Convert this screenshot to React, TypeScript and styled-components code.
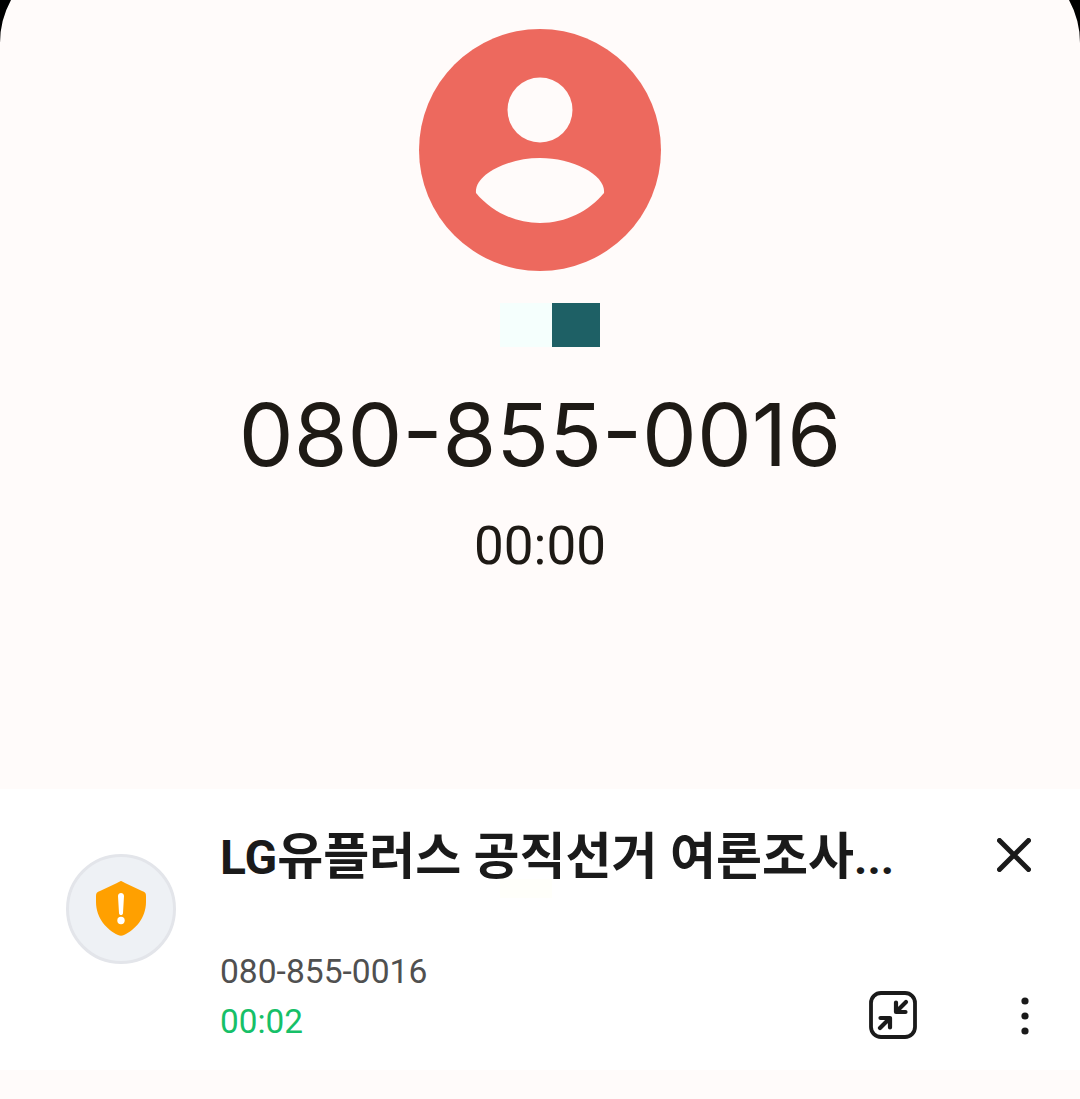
import React from 'react';
import styled, { createGlobalStyle } from 'styled-components';

const GlobalStyle = createGlobalStyle`
  html, body {
    margin: 0;
    padding: 0;
    background: #000;
  }
  * {
    box-sizing: border-box;
  }
`;

const Screen = styled.div`
  width: 1080px;
  height: 1099px;
  background: #fffbfa;
  clip-path: path('M11 0H1069A89.5 89.5 0 0 1 1080 43V1099H0V43A89.5 89.5 0 0 1 11 0Z');
  display: flex;
  flex-direction: column;
  overflow: hidden;
`;

const CallerArea = styled.section`
  height: 789px;
  padding-top: 29px;
  display: flex;
  flex-direction: column;
  align-items: center;
`;

const Avatar = styled.div`
  width: 242px;
  height: 242px;
  flex-shrink: 0;
  svg {
    display: block;
  }
`;

const Redaction = styled.div`
  margin-top: 32px;
  margin-left: 20px;
  display: flex;
  height: 44px;
`;

const RedactionBlock = styled.div<{ $width: number; $color: string }>`
  width: ${(p) => p.$width}px;
  background: ${(p) => p.$color};
`;

const PhoneNumber = styled.div`
  margin-top: 33px;
  font-family: 'Inter', sans-serif;
  font-size: 87px;
  line-height: 110px;
  font-weight: 400;
  color: #1e1a15;
  white-space: nowrap;
`;

const Timer = styled.div`
  margin-top: 25px;
  font-family: 'Roboto', sans-serif;
  font-size: 53px;
  line-height: 62px;
  font-weight: 400;
  color: #1e1a15;
`;

const Card = styled.section`
  position: relative;
  height: 281px;
  background: #fff;
  display: flex;
  padding-left: 66px;
`;

const GhostPatch = styled.div`
  position: absolute;
  left: 500px;
  top: 90px;
  width: 52px;
  height: 19px;
  background: #fffffa;
`;

const IconCol = styled.div`
  width: 154px;
  flex-shrink: 0;
  padding-top: 65px;
`;

const ShieldCircle = styled.div`
  width: 110px;
  height: 110px;
  border-radius: 50%;
  background: #eef1f5;
  border: 3px solid #e3e5ea;
  display: flex;
  align-items: center;
  justify-content: center;
`;

const TextCol = styled.div`
  width: 649px;
  flex-shrink: 0;
  display: flex;
  flex-direction: column;
  padding-top: 41px;
  position: relative;
`;

const Title = styled.div`
  font-family: 'Roboto', 'Noto Sans CJK KR', sans-serif;
  font-size: 50px;
  line-height: 54px;
  font-weight: 700;
  color: #1a1a1a;
  white-space: nowrap;
`;

const Latin = styled.span`
  font-size: 48px;
`;

const Dots = styled.span`
  font-size: 46px;
`;

const Number = styled.div`
  margin-top: 67px;
  font-family: 'Roboto', sans-serif;
  font-size: 33.6px;
  line-height: 40px;
  color: #505050;
`;

const Elapsed = styled.div`
  margin-top: 10px;
  font-family: 'Roboto', sans-serif;
  font-size: 33.3px;
  line-height: 40px;
  color: #16c068;
`;

const ActionCol = styled.div`
  flex: 1;
  padding-top: 49px;
  display: flex;
  flex-direction: column;
`;

const CloseButton = styled.button`
  margin-left: 128px;
  width: 34px;
  height: 34px;
  padding: 0;
  border: none;
  background: none;
  svg {
    display: block;
  }
`;

const BottomActions = styled.div`
  margin-top: 119px;
  display: flex;
  align-items: flex-start;
  gap: 103px;
  svg {
    display: block;
  }
`;

const MoreButton = styled.div`
  margin-top: 5px;
`;

const PersonAvatar = () => (
  <svg width="242" height="242" viewBox="0 0 242 242">
    <circle cx="121" cy="121" r="121" fill="#ed695e" />
    <circle cx="121" cy="81" r="32.5" fill="#fffbfa" />
    <path
      d="M57 164C55 146 88 129 121 129C154 129 187 146 185 164C170 182 147 194 121 194C95 194 72 182 57 164Z"
      fill="#fffbfa"
    />
  </svg>
);

const ShieldIcon = () => (
  <svg width="52" height="56" viewBox="0 0 52 56">
    <path
      d="M26 0C27 0 28 1 30 2L47 10C50 11 51 12 51 15V21C51 37 40 49 29 54C27 55 25 55 23 54C12 49 1 37 1 21V15C1 12 2 11 5 10L22 2C24 1 25 0 26 0Z"
      fill="#ffa000"
    />
    <path d="M23 15C23 13 24.5 12 26 12C27.5 12 29 13 29 15L28 32C28 33.5 27 34 26 34C25 34 24 33.5 24 32Z" fill="#fff" />
    <circle cx="26" cy="39.5" r="3.7" fill="#fff" />
  </svg>
);

const CloseIcon = () => (
  <svg width="34" height="34" viewBox="0 0 34 34">
    <path d="M2.5 2.5L31.5 31.5M31.5 2.5L2.5 31.5" stroke="#1a1a1a" strokeWidth="5" strokeLinecap="round" />
  </svg>
);

const CompressIcon = () => (
  <svg width="48" height="48" viewBox="0 0 48 48" fill="none">
    <rect x="2" y="2" width="44" height="44" rx="10" stroke="#1a1a1a" strokeWidth="3.8" />
    <path d="M11 37L20.5 27.5M11.5 27H21V36.5" stroke="#1a1a1a" strokeWidth="4.2" strokeLinecap="round" strokeLinejoin="round" />
    <path d="M37 11L27.5 20.5M27 11.5V21H36.5" stroke="#1a1a1a" strokeWidth="4.2" strokeLinecap="round" strokeLinejoin="round" />
  </svg>
);

const MoreIcon = () => (
  <svg width="10" height="40" viewBox="0 0 10 40">
    <circle cx="5" cy="5" r="3.6" fill="#1a1a1a" />
    <circle cx="5" cy="20" r="3.6" fill="#1a1a1a" />
    <circle cx="5" cy="35" r="3.6" fill="#1a1a1a" />
  </svg>
);

const App: React.FC = () => {
  return (
    <Screen>
      <GlobalStyle />
      <CallerArea>
        <Avatar>
          <PersonAvatar />
        </Avatar>
        <Redaction>
          <RedactionBlock $width={52} $color="#f5fffd" />
          <RedactionBlock $width={48} $color="#1e6065" />
        </Redaction>
        <PhoneNumber>080-855-0016</PhoneNumber>
        <Timer>00:00</Timer>
      </CallerArea>
      <Card>
        <GhostPatch />
        <IconCol>
          <ShieldCircle>
            <ShieldIcon />
          </ShieldCircle>
        </IconCol>
        <TextCol>
          <Title>
            <Latin>LG</Latin>유플러스 공직선거 여론조사<Dots>...</Dots>
          </Title>
          <Number>080-855-0016</Number>
          <Elapsed>00:02</Elapsed>
        </TextCol>
        <ActionCol>
          <CloseButton>
            <CloseIcon />
          </CloseButton>
          <BottomActions>
            <CompressIcon />
            <MoreButton>
              <MoreIcon />
            </MoreButton>
          </BottomActions>
        </ActionCol>
      </Card>
    </Screen>
  );
};

export default App;
